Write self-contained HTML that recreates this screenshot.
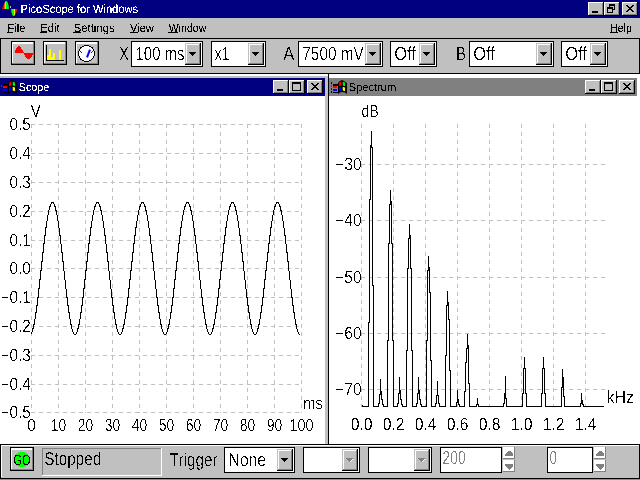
<!DOCTYPE html>
<html><head><meta charset="utf-8"><title>PicoScope for Windows</title>
<style>
html,body{margin:0;padding:0;background:#c0c0c0;overflow:hidden}
svg{display:block;font-family:"Liberation Sans",sans-serif}
</style></head><body>
<svg width="640" height="480" viewBox="0 0 640 480" shape-rendering="crispEdges" text-rendering="geometricPrecision">
<defs><filter id="crisp" x="-5%" y="-20%" width="110%" height="140%" color-interpolation-filters="sRGB"><feComponentTransfer><feFuncA type="discrete" tableValues="0 0 0 1 1"/></feComponentTransfer></filter><filter id="crisp12" x="-5%" y="-20%" width="110%" height="140%" color-interpolation-filters="sRGB"><feComponentTransfer><feFuncA type="discrete" tableValues="0 0 0 0 0 0 0 0 0 1 1 1 1 1 1 1 1 1 1 1"/></feComponentTransfer></filter></defs>
<rect x="0" y="0" width="640" height="480" fill="#c0c0c0"/>
<rect x="0" y="0" width="640" height="18" fill="#000080"/>
<defs><linearGradient id="rb" x1="0" x2="1" y1="0" y2="0"><stop offset="0" stop-color="#f00"/><stop offset=".3" stop-color="#f00"/><stop offset=".45" stop-color="#ff0"/><stop offset=".6" stop-color="#0f0"/><stop offset=".85" stop-color="#0f0"/><stop offset="1" stop-color="#088"/></linearGradient><linearGradient id="rb2" x1="0" x2="1" y1="0" y2="0"><stop offset="0" stop-color="#088"/><stop offset=".12" stop-color="#0f0"/><stop offset=".4" stop-color="#0f0"/><stop offset=".55" stop-color="#ff0"/><stop offset=".7" stop-color="#f00"/><stop offset="1" stop-color="#f00"/></linearGradient></defs>
<g shape-rendering="auto">
<path d="M3 9 L4 6 L6 2 L7 1 L8 1 L9 3 L10 6 L10 9 Z" fill="#000"/>
<path d="M2 9 L3 6 L5 2 L6 1 L7 1 L8 3 L9 6 L9 9 Z" fill="url(#rb)"/>
<path d="M11.5 9.5 L18 9.5 L18 11 L16 15 L15 16.5 L13.5 16.5 L12.5 14 Z" fill="#000"/>
<path d="M11 9 L17.5 9 L17 11 L15 15 L14 16 L13 16 L12 14 L11 11 Z" fill="url(#rb2)"/>
<rect x="10" y="6" width="1" height="2" fill="#c0c0c0"/>
</g>
<text x="20.6" y="13" font-size="12" fill="#fff" textLength="117.5" lengthAdjust="spacingAndGlyphs" filter="url(#crisp12)">PicoScope for Windows</text>
<rect x="588" y="2" width="16" height="14" fill="#c0c0c0"/>
<rect x="588" y="2" width="15" height="1" fill="#fff"/>
<rect x="588" y="2" width="1" height="13" fill="#fff"/>
<rect x="588" y="15" width="16" height="1" fill="#000"/>
<rect x="603" y="2" width="1" height="14" fill="#000"/>
<rect x="589" y="14" width="14" height="1" fill="#808080"/>
<rect x="602" y="3" width="1" height="12" fill="#808080"/>
<rect x="604" y="2" width="16" height="14" fill="#c0c0c0"/>
<rect x="604" y="2" width="15" height="1" fill="#fff"/>
<rect x="604" y="2" width="1" height="13" fill="#fff"/>
<rect x="604" y="15" width="16" height="1" fill="#000"/>
<rect x="619" y="2" width="1" height="14" fill="#000"/>
<rect x="605" y="14" width="14" height="1" fill="#808080"/>
<rect x="618" y="3" width="1" height="12" fill="#808080"/>
<rect x="622" y="2" width="16" height="14" fill="#c0c0c0"/>
<rect x="622" y="2" width="15" height="1" fill="#fff"/>
<rect x="622" y="2" width="1" height="13" fill="#fff"/>
<rect x="622" y="15" width="16" height="1" fill="#000"/>
<rect x="637" y="2" width="1" height="14" fill="#000"/>
<rect x="623" y="14" width="14" height="1" fill="#808080"/>
<rect x="636" y="3" width="1" height="12" fill="#808080"/>
<rect x="592" y="11" width="6" height="2" fill="#000"/>
<rect x="609" y="4" width="6" height="2" fill="#000"/>
<rect x="609" y="4" width="1" height="5" fill="#000"/>
<rect x="614" y="4" width="1" height="6" fill="#000"/>
<rect x="612" y="9" width="3" height="1" fill="#000"/>
<rect x="607" y="7" width="6" height="2" fill="#000"/>
<rect x="607" y="7" width="1" height="6" fill="#000"/>
<rect x="612" y="7" width="1" height="6" fill="#000"/>
<rect x="607" y="12" width="6" height="1" fill="#000"/>
<path d="M626 5 L633 12 M633 5 L626 12" stroke="#000" stroke-width="1.8" fill="none" transform="translate(0.5,0)"/>
<text x="7.5" y="31.5" font-size="12" fill="#000" textLength="17.8" lengthAdjust="spacingAndGlyphs" filter="url(#crisp12)">File</text>
<rect x="7" y="32" width="6" height="1" fill="#000"/>
<text x="40.3" y="31.5" font-size="12" fill="#000" textLength="19.3" lengthAdjust="spacingAndGlyphs" filter="url(#crisp12)">Edit</text>
<rect x="40" y="32" width="7" height="1" fill="#000"/>
<text x="73.7" y="31.5" font-size="12" fill="#000" textLength="41" lengthAdjust="spacingAndGlyphs" filter="url(#crisp12)">Settings</text>
<rect x="73" y="32" width="8" height="1" fill="#000"/>
<text x="130" y="31.5" font-size="12" fill="#000" textLength="23.8" lengthAdjust="spacingAndGlyphs" filter="url(#crisp12)">View</text>
<rect x="130" y="32" width="8" height="1" fill="#000"/>
<text x="168.8" y="31.5" font-size="12" fill="#000" textLength="37.5" lengthAdjust="spacingAndGlyphs" filter="url(#crisp12)">Window</text>
<rect x="168" y="32" width="10" height="1" fill="#000"/>
<text x="610" y="31.5" font-size="12" fill="#000" textLength="21.8" lengthAdjust="spacingAndGlyphs" filter="url(#crisp12)">Help</text>
<rect x="610" y="32" width="8" height="1" fill="#000"/>
<rect x="0" y="38" width="640" height="36" fill="#000"/>
<rect x="1" y="39" width="638" height="34" fill="#c0c0c0"/>
<rect x="11" y="41" width="24" height="24" fill="#000"/>
<rect x="12" y="42" width="22" height="22" fill="#c0c0c0"/>
<rect x="12" y="42" width="21" height="2" fill="#fff"/>
<rect x="12" y="42" width="1" height="21" fill="#fff"/>
<rect x="12" y="63" width="22" height="1" fill="#808080"/>
<rect x="33" y="42" width="1" height="22" fill="#808080"/>
<rect x="43" y="41" width="24" height="24" fill="#000"/>
<rect x="44" y="42" width="22" height="22" fill="#c0c0c0"/>
<rect x="44" y="42" width="21" height="2" fill="#fff"/>
<rect x="44" y="42" width="1" height="21" fill="#fff"/>
<rect x="44" y="63" width="22" height="1" fill="#808080"/>
<rect x="65" y="42" width="1" height="22" fill="#808080"/>
<rect x="75" y="41" width="24" height="24" fill="#000"/>
<rect x="76" y="42" width="22" height="22" fill="#c0c0c0"/>
<rect x="76" y="42" width="21" height="2" fill="#fff"/>
<rect x="76" y="42" width="1" height="21" fill="#fff"/>
<rect x="76" y="63" width="22" height="1" fill="#808080"/>
<rect x="97" y="42" width="1" height="22" fill="#808080"/>
<path d="M15 53 L15 51 L18 46 L20 46 L23 51 L24 53 L33 53 L33 54 L31 58 L29 59 L27 59 L25 57 L24 53 Z" fill="#f00"/>
<rect x="46" y="45" width="1" height="16" fill="#000"/>
<rect x="46" y="60" width="18" height="1" fill="#000"/>
<rect x="47" y="55" width="2" height="5" fill="#ff0"/>
<rect x="49" y="49" width="2" height="11" fill="#ff0"/>
<rect x="51" y="57" width="2" height="3" fill="#ff0"/>
<rect x="53" y="53" width="2" height="7" fill="#ff0"/>
<rect x="59" y="50" width="2" height="10" fill="#ff0"/>
<circle cx="86.5" cy="53.5" r="8" fill="#fff" stroke="#000" stroke-width="1"/>
<path d="M87 57.3 L90 49.7" stroke="#00f" stroke-width="2" fill="none" shape-rendering="geometricPrecision"/>
<path d="M80 51 L82 52.7 M91.3 52.5 L92.8 51" stroke="#00f" stroke-width="1" fill="none"/>
<text x="119.2" y="60" font-size="19" fill="#000" textLength="9.5" lengthAdjust="spacingAndGlyphs" filter="url(#crisp)">X</text>
<text x="283.2" y="60" font-size="19" fill="#000" textLength="11" lengthAdjust="spacingAndGlyphs" filter="url(#crisp)">A</text>
<text x="456" y="60" font-size="19" fill="#000" textLength="10" lengthAdjust="spacingAndGlyphs" filter="url(#crisp)">B</text>
<rect x="131" y="41" width="72" height="26" fill="#000"/>
<rect x="132" y="42" width="70" height="24" fill="#fff"/>
<rect x="185" y="43" width="16" height="22" fill="#c0c0c0"/>
<rect x="186" y="44" width="14" height="1" fill="#fff"/>
<rect x="186" y="44" width="1" height="20" fill="#fff"/>
<rect x="186" y="63" width="14" height="1" fill="#808080"/>
<rect x="199" y="44" width="1" height="20" fill="#808080"/>
<rect x="185" y="64" width="16" height="1" fill="#000"/>
<rect x="200" y="43" width="1" height="22" fill="#000"/>
<rect x="189" y="52" width="7" height="1" fill="#000"/>
<rect x="190" y="53" width="5" height="1" fill="#000"/>
<rect x="191" y="54" width="3" height="1" fill="#000"/>
<rect x="192" y="55" width="1" height="1" fill="#000"/>
<text x="135.6" y="60" font-size="19" fill="#000" textLength="48.8" lengthAdjust="spacingAndGlyphs" filter="url(#crisp)">100 ms</text>
<rect x="211" y="41" width="55" height="26" fill="#000"/>
<rect x="212" y="42" width="53" height="24" fill="#fff"/>
<rect x="248" y="43" width="16" height="22" fill="#c0c0c0"/>
<rect x="249" y="44" width="14" height="1" fill="#fff"/>
<rect x="249" y="44" width="1" height="20" fill="#fff"/>
<rect x="249" y="63" width="14" height="1" fill="#808080"/>
<rect x="262" y="44" width="1" height="20" fill="#808080"/>
<rect x="248" y="64" width="16" height="1" fill="#000"/>
<rect x="263" y="43" width="1" height="22" fill="#000"/>
<rect x="252" y="52" width="7" height="1" fill="#000"/>
<rect x="253" y="53" width="5" height="1" fill="#000"/>
<rect x="254" y="54" width="3" height="1" fill="#000"/>
<rect x="255" y="55" width="1" height="1" fill="#000"/>
<text x="214.8" y="60" font-size="19" fill="#000" textLength="14.5" lengthAdjust="spacingAndGlyphs" filter="url(#crisp)">x1</text>
<rect x="298" y="41" width="85" height="26" fill="#000"/>
<rect x="299" y="42" width="83" height="24" fill="#fff"/>
<rect x="365" y="43" width="16" height="22" fill="#c0c0c0"/>
<rect x="366" y="44" width="14" height="1" fill="#fff"/>
<rect x="366" y="44" width="1" height="20" fill="#fff"/>
<rect x="366" y="63" width="14" height="1" fill="#808080"/>
<rect x="379" y="44" width="1" height="20" fill="#808080"/>
<rect x="365" y="64" width="16" height="1" fill="#000"/>
<rect x="380" y="43" width="1" height="22" fill="#000"/>
<rect x="369" y="52" width="7" height="1" fill="#000"/>
<rect x="370" y="53" width="5" height="1" fill="#000"/>
<rect x="371" y="54" width="3" height="1" fill="#000"/>
<rect x="372" y="55" width="1" height="1" fill="#000"/>
<text x="302.3" y="60" font-size="19" fill="#000" textLength="61.5" lengthAdjust="spacingAndGlyphs" filter="url(#crisp)">7500 mV</text>
<rect x="390" y="41" width="47" height="26" fill="#000"/>
<rect x="391" y="42" width="45" height="24" fill="#fff"/>
<rect x="419" y="43" width="16" height="22" fill="#c0c0c0"/>
<rect x="420" y="44" width="14" height="1" fill="#fff"/>
<rect x="420" y="44" width="1" height="20" fill="#fff"/>
<rect x="420" y="63" width="14" height="1" fill="#808080"/>
<rect x="433" y="44" width="1" height="20" fill="#808080"/>
<rect x="419" y="64" width="16" height="1" fill="#000"/>
<rect x="434" y="43" width="1" height="22" fill="#000"/>
<rect x="423" y="52" width="7" height="1" fill="#000"/>
<rect x="424" y="53" width="5" height="1" fill="#000"/>
<rect x="425" y="54" width="3" height="1" fill="#000"/>
<rect x="426" y="55" width="1" height="1" fill="#000"/>
<text x="394.2" y="60" font-size="19" fill="#000" textLength="21.5" lengthAdjust="spacingAndGlyphs" filter="url(#crisp)">Off</text>
<rect x="469" y="41" width="85" height="26" fill="#000"/>
<rect x="470" y="42" width="83" height="24" fill="#fff"/>
<rect x="536" y="43" width="16" height="22" fill="#c0c0c0"/>
<rect x="537" y="44" width="14" height="1" fill="#fff"/>
<rect x="537" y="44" width="1" height="20" fill="#fff"/>
<rect x="537" y="63" width="14" height="1" fill="#808080"/>
<rect x="550" y="44" width="1" height="20" fill="#808080"/>
<rect x="536" y="64" width="16" height="1" fill="#000"/>
<rect x="551" y="43" width="1" height="22" fill="#000"/>
<rect x="540" y="52" width="7" height="1" fill="#000"/>
<rect x="541" y="53" width="5" height="1" fill="#000"/>
<rect x="542" y="54" width="3" height="1" fill="#000"/>
<rect x="543" y="55" width="1" height="1" fill="#000"/>
<text x="473.2" y="60" font-size="19" fill="#000" textLength="21.5" lengthAdjust="spacingAndGlyphs" filter="url(#crisp)">Off</text>
<rect x="561" y="41" width="47" height="26" fill="#000"/>
<rect x="562" y="42" width="45" height="24" fill="#fff"/>
<rect x="590" y="43" width="16" height="22" fill="#c0c0c0"/>
<rect x="591" y="44" width="14" height="1" fill="#fff"/>
<rect x="591" y="44" width="1" height="20" fill="#fff"/>
<rect x="591" y="63" width="14" height="1" fill="#808080"/>
<rect x="604" y="44" width="1" height="20" fill="#808080"/>
<rect x="590" y="64" width="16" height="1" fill="#000"/>
<rect x="605" y="43" width="1" height="22" fill="#000"/>
<rect x="594" y="52" width="7" height="1" fill="#000"/>
<rect x="595" y="53" width="5" height="1" fill="#000"/>
<rect x="596" y="54" width="3" height="1" fill="#000"/>
<rect x="597" y="55" width="1" height="1" fill="#000"/>
<text x="565.2" y="60" font-size="19" fill="#000" textLength="21.5" lengthAdjust="spacingAndGlyphs" filter="url(#crisp)">Off</text>
<rect x="0" y="74" width="328" height="2" fill="#fff"/>
<rect x="0" y="76" width="328" height="2" fill="#c0c0c0"/>
<rect x="0" y="78" width="325" height="18" fill="#000080"/>
<rect x="0" y="96" width="325" height="348" fill="#fff"/>
<rect x="325" y="76" width="3" height="368" fill="#c0c0c0"/>
<rect x="328" y="74" width="1" height="370" fill="#000"/>
<rect x="329" y="74" width="311" height="370" fill="#fff"/>
<rect x="329" y="78" width="308" height="18" fill="#808080"/>
<rect x="273" y="80" width="16" height="14" fill="#c0c0c0"/>
<rect x="273" y="80" width="15" height="1" fill="#fff"/>
<rect x="273" y="80" width="1" height="13" fill="#fff"/>
<rect x="273" y="93" width="16" height="1" fill="#000"/>
<rect x="288" y="80" width="1" height="14" fill="#000"/>
<rect x="274" y="92" width="14" height="1" fill="#808080"/>
<rect x="287" y="81" width="1" height="12" fill="#808080"/>
<rect x="289" y="80" width="16" height="14" fill="#c0c0c0"/>
<rect x="289" y="80" width="15" height="1" fill="#fff"/>
<rect x="289" y="80" width="1" height="13" fill="#fff"/>
<rect x="289" y="93" width="16" height="1" fill="#000"/>
<rect x="304" y="80" width="1" height="14" fill="#000"/>
<rect x="290" y="92" width="14" height="1" fill="#808080"/>
<rect x="303" y="81" width="1" height="12" fill="#808080"/>
<rect x="307" y="80" width="16" height="14" fill="#c0c0c0"/>
<rect x="307" y="80" width="15" height="1" fill="#fff"/>
<rect x="307" y="80" width="1" height="13" fill="#fff"/>
<rect x="307" y="93" width="16" height="1" fill="#000"/>
<rect x="322" y="80" width="1" height="14" fill="#000"/>
<rect x="308" y="92" width="14" height="1" fill="#808080"/>
<rect x="321" y="81" width="1" height="12" fill="#808080"/>
<rect x="585" y="80" width="16" height="14" fill="#c0c0c0"/>
<rect x="585" y="80" width="15" height="1" fill="#fff"/>
<rect x="585" y="80" width="1" height="13" fill="#fff"/>
<rect x="585" y="93" width="16" height="1" fill="#000"/>
<rect x="600" y="80" width="1" height="14" fill="#000"/>
<rect x="586" y="92" width="14" height="1" fill="#808080"/>
<rect x="599" y="81" width="1" height="12" fill="#808080"/>
<rect x="601" y="80" width="16" height="14" fill="#c0c0c0"/>
<rect x="601" y="80" width="15" height="1" fill="#fff"/>
<rect x="601" y="80" width="1" height="13" fill="#fff"/>
<rect x="601" y="93" width="16" height="1" fill="#000"/>
<rect x="616" y="80" width="1" height="14" fill="#000"/>
<rect x="602" y="92" width="14" height="1" fill="#808080"/>
<rect x="615" y="81" width="1" height="12" fill="#808080"/>
<rect x="619" y="80" width="16" height="14" fill="#c0c0c0"/>
<rect x="619" y="80" width="15" height="1" fill="#fff"/>
<rect x="619" y="80" width="1" height="13" fill="#fff"/>
<rect x="619" y="93" width="16" height="1" fill="#000"/>
<rect x="634" y="80" width="1" height="14" fill="#000"/>
<rect x="620" y="92" width="14" height="1" fill="#808080"/>
<rect x="633" y="81" width="1" height="12" fill="#808080"/>
<rect x="277" y="89" width="6" height="2" fill="#000"/>
<rect x="292" y="82" width="9" height="9" fill="#000"/>
<rect x="293" y="84" width="7" height="6" fill="#c0c0c0"/>
<path d="M311 83 L318 90 M318 83 L311 90" stroke="#000" stroke-width="1.8" fill="none" transform="translate(0.5,0)"/>
<rect x="589" y="89" width="6" height="2" fill="#000"/>
<rect x="604" y="82" width="9" height="9" fill="#000"/>
<rect x="605" y="84" width="7" height="6" fill="#c0c0c0"/>
<path d="M623 83 L630 90 M630 83 L623 90" stroke="#000" stroke-width="1.8" fill="none" transform="translate(0.5,0)"/>
<g transform="translate(0,77)" shape-rendering="auto"><path d="M8 6 L10 4 L12 3 L14 4 L17 6 L17 17 L15 15.5 L12 15 L10 15.5 L8 17 Z" fill="#000"/><path d="M9.2 5.5 L11.3 4.6 L11.3 8.6 L9.2 9.4 Z" fill="#f00"/><path d="M12.7 4.6 L15 5.5 L15 9.2 L12.7 8.6 Z" fill="#0e0"/><path d="M9.2 10.6 L11.3 9.8 L11.3 13.6 L9.2 14.4 Z" fill="#00f"/><path d="M12.7 9.8 L15 10.6 L15 14.2 L12.7 13.6 Z" fill="#ff0"/><rect x="3" y="7" width="5" height="2" fill="#000"/><rect x="3" y="9" width="4" height="2" fill="#f00"/><rect x="3" y="12" width="4" height="2" fill="#00f"/><rect x="3" y="15" width="5" height="1" fill="#000"/><rect x="1" y="5" width="1" height="2" fill="#000"/><rect x="1" y="8" width="1" height="2" fill="#f00"/><rect x="1" y="11" width="1" height="2" fill="#00f"/><rect x="1" y="14" width="1" height="2" fill="#000"/></g>
<g transform="translate(330,77)" shape-rendering="auto"><path d="M8 6 L10 4 L12 3 L14 4 L17 6 L17 17 L15 15.5 L12 15 L10 15.5 L8 17 Z" fill="#000"/><path d="M9.2 5.5 L11.3 4.6 L11.3 8.6 L9.2 9.4 Z" fill="#f00"/><path d="M12.7 4.6 L15 5.5 L15 9.2 L12.7 8.6 Z" fill="#0e0"/><path d="M9.2 10.6 L11.3 9.8 L11.3 13.6 L9.2 14.4 Z" fill="#00f"/><path d="M12.7 9.8 L15 10.6 L15 14.2 L12.7 13.6 Z" fill="#ff0"/><rect x="3" y="7" width="5" height="2" fill="#000"/><rect x="3" y="9" width="4" height="2" fill="#f00"/><rect x="3" y="12" width="4" height="2" fill="#00f"/><rect x="3" y="15" width="5" height="1" fill="#000"/><rect x="1" y="5" width="1" height="2" fill="#000"/><rect x="1" y="8" width="1" height="2" fill="#f00"/><rect x="1" y="11" width="1" height="2" fill="#00f"/><rect x="1" y="14" width="1" height="2" fill="#000"/></g>
<text x="18.8" y="90.5" font-size="11.5" fill="#fff" textLength="30.5" lengthAdjust="spacingAndGlyphs" filter="url(#crisp12)">Scope</text>
<text x="348.8" y="91" font-size="11.5" fill="#000" textLength="47.5" lengthAdjust="spacingAndGlyphs" filter="url(#crisp12)">Spectrum</text>
<path d="M31.5 124 V413 M58.5 124 V413 M85.5 124 V413 M112.5 124 V413 M139.5 124 V413 M166.5 124 V413 M193.5 124 V413 M220.5 124 V413 M247.5 124 V413 M274.5 124 V413 M301.5 124 V413 M31 124.5 H302 M31 153.5 H302 M31 182.5 H302 M31 211.5 H302 M31 240.5 H302 M31 268.5 H302 M31 297.5 H302 M31 326.5 H302 M31 355.5 H302 M31 384.5 H302 M31 412.5 H302" stroke="#c0c0c0" stroke-width="1" fill="none" stroke-dasharray="4 4" shape-rendering="crispEdges"/>
<polyline points="31.0,333.9 31.5,333.1 32.0,331.9 32.5,330.5 33.0,328.8 33.5,326.8 34.0,324.5 34.5,321.9 35.0,319.1 35.5,316.0 36.0,312.7 36.5,309.1 37.0,305.4 37.5,301.5 38.0,297.4 38.5,293.2 39.0,288.9 39.5,284.5 40.0,280.0 40.5,275.4 41.0,270.8 41.5,266.2 42.0,261.6 42.5,257.0 43.0,252.5 43.5,248.1 44.0,243.8 44.5,239.6 45.0,235.5 45.5,231.6 46.0,227.9 46.5,224.3 47.0,221.0 47.5,217.9 48.0,215.1 48.5,212.5 49.0,210.2 49.5,208.2 50.0,206.5 50.5,205.1 51.0,203.9 51.5,203.1 52.0,202.7 52.5,202.5 53.0,202.7 53.5,203.1 54.0,203.9 54.5,205.1 55.0,206.5 55.5,208.2 56.0,210.2 56.5,212.5 57.0,215.1 57.5,217.9 58.0,221.0 58.5,224.3 59.0,227.9 59.5,231.6 60.0,235.5 60.5,239.6 61.0,243.8 61.5,248.1 62.0,252.5 62.5,257.0 63.0,261.6 63.5,266.2 64.0,270.8 64.5,275.4 65.0,280.0 65.5,284.5 66.0,288.9 66.5,293.2 67.0,297.4 67.5,301.5 68.0,305.4 68.5,309.1 69.0,312.7 69.5,316.0 70.0,319.1 70.5,321.9 71.0,324.5 71.5,326.8 72.0,328.8 72.5,330.5 73.0,331.9 73.5,333.1 74.0,333.9 74.5,334.3 75.0,334.5 75.5,334.3 76.0,333.9 76.5,333.1 77.0,331.9 77.5,330.5 78.0,328.8 78.5,326.8 79.0,324.5 79.5,321.9 80.0,319.1 80.5,316.0 81.0,312.7 81.5,309.1 82.0,305.4 82.5,301.5 83.0,297.4 83.5,293.2 84.0,288.9 84.5,284.5 85.0,280.0 85.5,275.4 86.0,270.8 86.5,266.2 87.0,261.6 87.5,257.0 88.0,252.5 88.5,248.1 89.0,243.8 89.5,239.6 90.0,235.5 90.5,231.6 91.0,227.9 91.5,224.3 92.0,221.0 92.5,217.9 93.0,215.1 93.5,212.5 94.0,210.2 94.5,208.2 95.0,206.5 95.5,205.1 96.0,203.9 96.5,203.1 97.0,202.7 97.5,202.5 98.0,202.7 98.5,203.1 99.0,203.9 99.5,205.1 100.0,206.5 100.5,208.2 101.0,210.2 101.5,212.5 102.0,215.1 102.5,217.9 103.0,221.0 103.5,224.3 104.0,227.9 104.5,231.6 105.0,235.5 105.5,239.6 106.0,243.8 106.5,248.1 107.0,252.5 107.5,257.0 108.0,261.6 108.5,266.2 109.0,270.8 109.5,275.4 110.0,280.0 110.5,284.5 111.0,288.9 111.5,293.2 112.0,297.4 112.5,301.5 113.0,305.4 113.5,309.1 114.0,312.7 114.5,316.0 115.0,319.1 115.5,321.9 116.0,324.5 116.5,326.8 117.0,328.8 117.5,330.5 118.0,331.9 118.5,333.1 119.0,333.9 119.5,334.3 120.0,334.5 120.5,334.3 121.0,333.9 121.5,333.1 122.0,331.9 122.5,330.5 123.0,328.8 123.5,326.8 124.0,324.5 124.5,321.9 125.0,319.1 125.5,316.0 126.0,312.7 126.5,309.1 127.0,305.4 127.5,301.5 128.0,297.4 128.5,293.2 129.0,288.9 129.5,284.5 130.0,280.0 130.5,275.4 131.0,270.8 131.5,266.2 132.0,261.6 132.5,257.0 133.0,252.5 133.5,248.1 134.0,243.8 134.5,239.6 135.0,235.5 135.5,231.6 136.0,227.9 136.5,224.3 137.0,221.0 137.5,217.9 138.0,215.1 138.5,212.5 139.0,210.2 139.5,208.2 140.0,206.5 140.5,205.1 141.0,203.9 141.5,203.1 142.0,202.7 142.5,202.5 143.0,202.7 143.5,203.1 144.0,203.9 144.5,205.1 145.0,206.5 145.5,208.2 146.0,210.2 146.5,212.5 147.0,215.1 147.5,217.9 148.0,221.0 148.5,224.3 149.0,227.9 149.5,231.6 150.0,235.5 150.5,239.6 151.0,243.8 151.5,248.1 152.0,252.5 152.5,257.0 153.0,261.6 153.5,266.2 154.0,270.8 154.5,275.4 155.0,280.0 155.5,284.5 156.0,288.9 156.5,293.2 157.0,297.4 157.5,301.5 158.0,305.4 158.5,309.1 159.0,312.7 159.5,316.0 160.0,319.1 160.5,321.9 161.0,324.5 161.5,326.8 162.0,328.8 162.5,330.5 163.0,331.9 163.5,333.1 164.0,333.9 164.5,334.3 165.0,334.5 165.5,334.3 166.0,333.9 166.5,333.1 167.0,331.9 167.5,330.5 168.0,328.8 168.5,326.8 169.0,324.5 169.5,321.9 170.0,319.1 170.5,316.0 171.0,312.7 171.5,309.1 172.0,305.4 172.5,301.5 173.0,297.4 173.5,293.2 174.0,288.9 174.5,284.5 175.0,280.0 175.5,275.4 176.0,270.8 176.5,266.2 177.0,261.6 177.5,257.0 178.0,252.5 178.5,248.1 179.0,243.8 179.5,239.6 180.0,235.5 180.5,231.6 181.0,227.9 181.5,224.3 182.0,221.0 182.5,217.9 183.0,215.1 183.5,212.5 184.0,210.2 184.5,208.2 185.0,206.5 185.5,205.1 186.0,203.9 186.5,203.1 187.0,202.7 187.5,202.5 188.0,202.7 188.5,203.1 189.0,203.9 189.5,205.1 190.0,206.5 190.5,208.2 191.0,210.2 191.5,212.5 192.0,215.1 192.5,217.9 193.0,221.0 193.5,224.3 194.0,227.9 194.5,231.6 195.0,235.5 195.5,239.6 196.0,243.8 196.5,248.1 197.0,252.5 197.5,257.0 198.0,261.6 198.5,266.2 199.0,270.8 199.5,275.4 200.0,280.0 200.5,284.5 201.0,288.9 201.5,293.2 202.0,297.4 202.5,301.5 203.0,305.4 203.5,309.1 204.0,312.7 204.5,316.0 205.0,319.1 205.5,321.9 206.0,324.5 206.5,326.8 207.0,328.8 207.5,330.5 208.0,331.9 208.5,333.1 209.0,333.9 209.5,334.3 210.0,334.5 210.5,334.3 211.0,333.9 211.5,333.1 212.0,331.9 212.5,330.5 213.0,328.8 213.5,326.8 214.0,324.5 214.5,321.9 215.0,319.1 215.5,316.0 216.0,312.7 216.5,309.1 217.0,305.4 217.5,301.5 218.0,297.4 218.5,293.2 219.0,288.9 219.5,284.5 220.0,280.0 220.5,275.4 221.0,270.8 221.5,266.2 222.0,261.6 222.5,257.0 223.0,252.5 223.5,248.1 224.0,243.8 224.5,239.6 225.0,235.5 225.5,231.6 226.0,227.9 226.5,224.3 227.0,221.0 227.5,217.9 228.0,215.1 228.5,212.5 229.0,210.2 229.5,208.2 230.0,206.5 230.5,205.1 231.0,203.9 231.5,203.1 232.0,202.7 232.5,202.5 233.0,202.7 233.5,203.1 234.0,203.9 234.5,205.1 235.0,206.5 235.5,208.2 236.0,210.2 236.5,212.5 237.0,215.1 237.5,217.9 238.0,221.0 238.5,224.3 239.0,227.9 239.5,231.6 240.0,235.5 240.5,239.6 241.0,243.8 241.5,248.1 242.0,252.5 242.5,257.0 243.0,261.6 243.5,266.2 244.0,270.8 244.5,275.4 245.0,280.0 245.5,284.5 246.0,288.9 246.5,293.2 247.0,297.4 247.5,301.5 248.0,305.4 248.5,309.1 249.0,312.7 249.5,316.0 250.0,319.1 250.5,321.9 251.0,324.5 251.5,326.8 252.0,328.8 252.5,330.5 253.0,331.9 253.5,333.1 254.0,333.9 254.5,334.3 255.0,334.5 255.5,334.3 256.0,333.9 256.5,333.1 257.0,331.9 257.5,330.5 258.0,328.8 258.5,326.8 259.0,324.5 259.5,321.9 260.0,319.1 260.5,316.0 261.0,312.7 261.5,309.1 262.0,305.4 262.5,301.5 263.0,297.4 263.5,293.2 264.0,288.9 264.5,284.5 265.0,280.0 265.5,275.4 266.0,270.8 266.5,266.2 267.0,261.6 267.5,257.0 268.0,252.5 268.5,248.1 269.0,243.8 269.5,239.6 270.0,235.5 270.5,231.6 271.0,227.9 271.5,224.3 272.0,221.0 272.5,217.9 273.0,215.1 273.5,212.5 274.0,210.2 274.5,208.2 275.0,206.5 275.5,205.1 276.0,203.9 276.5,203.1 277.0,202.7 277.5,202.5 278.0,202.7 278.5,203.1 279.0,203.9 279.5,205.1 280.0,206.5 280.5,208.2 281.0,210.2 281.5,212.5 282.0,215.1 282.5,217.9 283.0,221.0 283.5,224.3 284.0,227.9 284.5,231.6 285.0,235.5 285.5,239.6 286.0,243.8 286.5,248.1 287.0,252.5 287.5,257.0 288.0,261.6 288.5,266.2 289.0,270.8 289.5,275.4 290.0,280.0 290.5,284.5 291.0,288.9 291.5,293.2 292.0,297.4 292.5,301.5 293.0,305.4 293.5,309.1 294.0,312.7 294.5,316.0 295.0,319.1 295.5,321.9 296.0,324.5 296.5,326.8 297.0,328.8 297.5,330.5 298.0,331.9 298.5,333.1 299.0,333.9 299.5,334.3 300.0,334.5" fill="none" stroke="#000" stroke-width="1.1"/>
<text x="30.8" y="130.2" font-size="17.6" fill="#000" text-anchor="end" textLength="21.2" lengthAdjust="spacingAndGlyphs" filter="url(#crisp)">0.5</text>
<text x="30.8" y="159.2" font-size="17.6" fill="#000" text-anchor="end" textLength="21.2" lengthAdjust="spacingAndGlyphs" filter="url(#crisp)">0.4</text>
<text x="30.8" y="188.2" font-size="17.6" fill="#000" text-anchor="end" textLength="21.2" lengthAdjust="spacingAndGlyphs" filter="url(#crisp)">0.3</text>
<text x="30.8" y="217.2" font-size="17.6" fill="#000" text-anchor="end" textLength="21.2" lengthAdjust="spacingAndGlyphs" filter="url(#crisp)">0.2</text>
<text x="30.8" y="246.2" font-size="17.6" fill="#000" text-anchor="end" textLength="21.2" lengthAdjust="spacingAndGlyphs" filter="url(#crisp)">0.1</text>
<text x="30.8" y="274.2" font-size="17.6" fill="#000" text-anchor="end" textLength="21.2" lengthAdjust="spacingAndGlyphs" filter="url(#crisp)">0.0</text>
<text x="30.8" y="303.2" font-size="17.6" fill="#000" text-anchor="end" textLength="30.4" lengthAdjust="spacingAndGlyphs" filter="url(#crisp)">−0.1</text>
<text x="30.8" y="332.2" font-size="17.6" fill="#000" text-anchor="end" textLength="30.4" lengthAdjust="spacingAndGlyphs" filter="url(#crisp)">−0.2</text>
<text x="30.8" y="361.2" font-size="17.6" fill="#000" text-anchor="end" textLength="30.4" lengthAdjust="spacingAndGlyphs" filter="url(#crisp)">−0.3</text>
<text x="30.8" y="390.2" font-size="17.6" fill="#000" text-anchor="end" textLength="30.4" lengthAdjust="spacingAndGlyphs" filter="url(#crisp)">−0.4</text>
<text x="30.8" y="418.2" font-size="17.6" fill="#000" text-anchor="end" textLength="30.4" lengthAdjust="spacingAndGlyphs" filter="url(#crisp)">−0.5</text>
<text x="31.5" y="431" font-size="17.6" fill="#000" text-anchor="middle" textLength="8.5" lengthAdjust="spacingAndGlyphs" filter="url(#crisp)">0</text>
<text x="58.5" y="431" font-size="17.6" fill="#000" text-anchor="middle" textLength="15.5" lengthAdjust="spacingAndGlyphs" filter="url(#crisp)">10</text>
<text x="85.5" y="431" font-size="17.6" fill="#000" text-anchor="middle" textLength="15.5" lengthAdjust="spacingAndGlyphs" filter="url(#crisp)">20</text>
<text x="112.5" y="431" font-size="17.6" fill="#000" text-anchor="middle" textLength="15.5" lengthAdjust="spacingAndGlyphs" filter="url(#crisp)">30</text>
<text x="139.5" y="431" font-size="17.6" fill="#000" text-anchor="middle" textLength="15.5" lengthAdjust="spacingAndGlyphs" filter="url(#crisp)">40</text>
<text x="166.5" y="431" font-size="17.6" fill="#000" text-anchor="middle" textLength="15.5" lengthAdjust="spacingAndGlyphs" filter="url(#crisp)">50</text>
<text x="193.5" y="431" font-size="17.6" fill="#000" text-anchor="middle" textLength="15.5" lengthAdjust="spacingAndGlyphs" filter="url(#crisp)">60</text>
<text x="220.5" y="431" font-size="17.6" fill="#000" text-anchor="middle" textLength="15.5" lengthAdjust="spacingAndGlyphs" filter="url(#crisp)">70</text>
<text x="247.5" y="431" font-size="17.6" fill="#000" text-anchor="middle" textLength="15.5" lengthAdjust="spacingAndGlyphs" filter="url(#crisp)">80</text>
<text x="274.5" y="431" font-size="17.6" fill="#000" text-anchor="middle" textLength="15.5" lengthAdjust="spacingAndGlyphs" filter="url(#crisp)">90</text>
<text x="301.5" y="431" font-size="17.6" fill="#000" text-anchor="middle" textLength="24" lengthAdjust="spacingAndGlyphs" filter="url(#crisp)">100</text>
<text x="30.6" y="116.6" font-size="18" fill="#000" textLength="10.5" lengthAdjust="spacingAndGlyphs" filter="url(#crisp)">V</text>
<text x="303.2" y="409" font-size="17.6" fill="#000" textLength="19.5" lengthAdjust="spacingAndGlyphs" filter="url(#crisp)">ms</text>
<path d="M361.5 124 V407 M393.5 124 V407 M425.5 124 V407 M457.5 124 V407 M489.5 124 V407 M521.5 124 V407 M553.5 124 V407 M585.5 124 V407 M361 164.5 H605 M361 220.5 H605 M361 277.5 H605 M361 333.5 H605 M361 389.5 H605" stroke="#c0c0c0" stroke-width="1" fill="none" stroke-dasharray="4 4" shape-rendering="crispEdges"/>
<path d="M362.5 404.5 V406.5 H368.5 V322.0 H369.5 V199.1 H370.5 V145.0 H371.5 V130.5 V147.3 H372.5 V285.5 H373.5 V406.5 H378.5 V403.4 H379.5 V394.4 H380.5 V378.5 V391.9 H381.5 V399.6 H382.5 V404.5 H383.5 V406.5 H387.5 V340.0 H388.5 V243.4 H389.5 V204.0 H390.5 V189.5 V201.0 H391.5 V243.4 H392.5 V340.0 H393.5 V406.5 H397.5 V403.2 H398.5 V393.5 H399.5 V376.5 V390.9 H400.5 V399.1 H401.5 V404.4 H402.5 V406.5 H406.5 V350.4 H407.5 V268.9 H408.5 V238.0 H409.5 V223.5 V235.0 H410.5 V268.9 H411.5 V350.4 H412.5 V406.5 H416.5 V403.2 H417.5 V393.5 H418.5 V376.5 V390.9 H419.5 V399.1 H420.5 V404.4 H421.5 V406.5 H426.5 V340.2 H427.5 V270.0 H428.5 V255.5 V267.0 H429.5 V292.9 H430.5 V360.2 H431.5 V406.5 H435.5 V403.6 H436.5 V395.2 H437.5 V380.5 V395.2 H438.5 V403.6 H439.5 V406.5 H445.5 V355.5 H446.5 V305.0 H447.5 V290.5 V302.0 H448.5 V319.1 H449.5 V370.9 H450.5 V406.5 H456.5 V402.3 H457.5 V389.5 V399.1 H458.5 V404.6 H459.5 V406.5 H464.5 V391.0 H465.5 V362.9 H466.5 V348.0 H467.5 V333.5 V345.1 H468.5 V383.6 H469.5 V406.5 H476.5 V404.2 H477.5 V397.5 V404.2 H478.5 V406.5 H503.5 V403.1 H504.5 V393.1 H505.5 V375.5 V398.9 H506.5 V406.5 H522.5 V393.9 H523.5 V368.6 H524.5 V356.5 V368.6 H525.5 V393.9 H526.5 V406.5 H541.5 V393.9 H542.5 V368.6 H543.5 V356.5 V368.6 H544.5 V393.9 H545.5 V406.5 H561.5 V387.2 H562.5 V368.5 V377.6 H563.5 V396.9 H564.5 V406.5 H580.5 V403.0 H581.5 V392.5 V400.3 H582.5 V404.9 H583.5 V406.5 H604" fill="none" stroke="#000" stroke-width="1"/>
<text x="361.6" y="170.2" font-size="17.6" fill="#000" text-anchor="end" textLength="26.5" lengthAdjust="spacingAndGlyphs" filter="url(#crisp)">−30</text>
<text x="361.6" y="226.2" font-size="17.6" fill="#000" text-anchor="end" textLength="26.5" lengthAdjust="spacingAndGlyphs" filter="url(#crisp)">−40</text>
<text x="361.6" y="283.2" font-size="17.6" fill="#000" text-anchor="end" textLength="26.5" lengthAdjust="spacingAndGlyphs" filter="url(#crisp)">−50</text>
<text x="361.6" y="339.2" font-size="17.6" fill="#000" text-anchor="end" textLength="26.5" lengthAdjust="spacingAndGlyphs" filter="url(#crisp)">−60</text>
<text x="361.6" y="395.2" font-size="17.6" fill="#000" text-anchor="end" textLength="26.5" lengthAdjust="spacingAndGlyphs" filter="url(#crisp)">−70</text>
<text x="361.7" y="430" font-size="17.6" fill="#000" text-anchor="middle" textLength="21.8" lengthAdjust="spacingAndGlyphs" filter="url(#crisp)">0.0</text>
<text x="393.7" y="430" font-size="17.6" fill="#000" text-anchor="middle" textLength="21.8" lengthAdjust="spacingAndGlyphs" filter="url(#crisp)">0.2</text>
<text x="425.7" y="430" font-size="17.6" fill="#000" text-anchor="middle" textLength="21.8" lengthAdjust="spacingAndGlyphs" filter="url(#crisp)">0.4</text>
<text x="457.7" y="430" font-size="17.6" fill="#000" text-anchor="middle" textLength="21.8" lengthAdjust="spacingAndGlyphs" filter="url(#crisp)">0.6</text>
<text x="489.7" y="430" font-size="17.6" fill="#000" text-anchor="middle" textLength="21.8" lengthAdjust="spacingAndGlyphs" filter="url(#crisp)">0.8</text>
<text x="521.7" y="430" font-size="17.6" fill="#000" text-anchor="middle" textLength="21.8" lengthAdjust="spacingAndGlyphs" filter="url(#crisp)">1.0</text>
<text x="553.7" y="430" font-size="17.6" fill="#000" text-anchor="middle" textLength="21.8" lengthAdjust="spacingAndGlyphs" filter="url(#crisp)">1.2</text>
<text x="585.7" y="430" font-size="17.6" fill="#000" text-anchor="middle" textLength="21.8" lengthAdjust="spacingAndGlyphs" filter="url(#crisp)">1.4</text>
<text x="361.4" y="116.7" font-size="17.6" fill="#000" textLength="17.5" lengthAdjust="spacingAndGlyphs" filter="url(#crisp)">dB</text>
<text x="606.6" y="403.2" font-size="17.6" fill="#000" textLength="27.5" lengthAdjust="spacingAndGlyphs" filter="url(#crisp)">kHz</text>
<rect x="0" y="444" width="640" height="35" fill="#000"/>
<rect x="1" y="445" width="638" height="33" fill="#c0c0c0"/>
<rect x="1" y="445" width="638" height="1" fill="#fff"/>
<rect x="1" y="445" width="1" height="32" fill="#fff"/>
<rect x="0" y="479" width="640" height="1" fill="#909090"/>
<rect x="10" y="447" width="24" height="24" fill="#000"/>
<rect x="11" y="448" width="22" height="22" fill="#c0c0c0"/>
<rect x="11" y="448" width="21" height="2" fill="#fff"/>
<rect x="11" y="448" width="1" height="21" fill="#fff"/>
<rect x="11" y="469" width="22" height="1" fill="#808080"/>
<rect x="32" y="448" width="1" height="22" fill="#808080"/>
<circle cx="22" cy="459.5" r="7.8" fill="#0f0" shape-rendering="auto"/>
<text x="22" y="464.8" font-size="14.9" fill="#000" text-anchor="middle" textLength="17" lengthAdjust="spacingAndGlyphs" filter="url(#crisp12)">GO</text>
<rect x="42" y="448" width="120" height="28" fill="#c0c0c0"/>
<rect x="42" y="448" width="120" height="1" fill="#808080"/>
<rect x="42" y="448" width="1" height="28" fill="#808080"/>
<rect x="42" y="475" width="120" height="1" fill="#fff"/>
<rect x="161" y="448" width="1" height="28" fill="#fff"/>
<text x="44.2" y="464.7" font-size="18.5" fill="#000" textLength="57" lengthAdjust="spacingAndGlyphs" filter="url(#crisp)">Stopped</text>
<text x="169.6" y="465.8" font-size="18.5" fill="#000" textLength="48" lengthAdjust="spacingAndGlyphs" filter="url(#crisp)">Trigger</text>
<rect x="224" y="447" width="71" height="26" fill="#000"/>
<rect x="225" y="448" width="69" height="24" fill="#fff"/>
<rect x="277" y="449" width="16" height="22" fill="#c0c0c0"/>
<rect x="278" y="450" width="14" height="1" fill="#fff"/>
<rect x="278" y="450" width="1" height="20" fill="#fff"/>
<rect x="278" y="469" width="14" height="1" fill="#808080"/>
<rect x="291" y="450" width="1" height="20" fill="#808080"/>
<rect x="277" y="470" width="16" height="1" fill="#000"/>
<rect x="292" y="449" width="1" height="22" fill="#000"/>
<rect x="281" y="458" width="7" height="1" fill="#000"/>
<rect x="282" y="459" width="5" height="1" fill="#000"/>
<rect x="283" y="460" width="3" height="1" fill="#000"/>
<rect x="284" y="461" width="1" height="1" fill="#000"/>
<text x="228.6" y="465.8" font-size="18.5" fill="#000" textLength="37.5" lengthAdjust="spacingAndGlyphs" filter="url(#crisp)">None</text>
<rect x="303" y="447" width="57" height="26" fill="#000"/>
<rect x="304" y="448" width="55" height="24" fill="#fff"/>
<rect x="342" y="449" width="16" height="22" fill="#c0c0c0"/>
<rect x="343" y="450" width="14" height="1" fill="#fff"/>
<rect x="343" y="450" width="1" height="20" fill="#fff"/>
<rect x="343" y="469" width="14" height="1" fill="#808080"/>
<rect x="356" y="450" width="1" height="20" fill="#808080"/>
<rect x="342" y="470" width="16" height="1" fill="#000"/>
<rect x="357" y="449" width="1" height="22" fill="#000"/>
<rect x="346" y="458" width="7" height="1" fill="#808080"/>
<rect x="347" y="459" width="5" height="1" fill="#808080"/>
<rect x="348" y="460" width="3" height="1" fill="#808080"/>
<rect x="349" y="461" width="1" height="1" fill="#808080"/>
<path d="M350 462 L353 459" stroke="#fff" stroke-width="1" fill="none"/>
<rect x="368" y="447" width="64" height="26" fill="#000"/>
<rect x="369" y="448" width="62" height="24" fill="#fff"/>
<rect x="414" y="449" width="16" height="22" fill="#c0c0c0"/>
<rect x="415" y="450" width="14" height="1" fill="#fff"/>
<rect x="415" y="450" width="1" height="20" fill="#fff"/>
<rect x="415" y="469" width="14" height="1" fill="#808080"/>
<rect x="428" y="450" width="1" height="20" fill="#808080"/>
<rect x="414" y="470" width="16" height="1" fill="#000"/>
<rect x="429" y="449" width="1" height="22" fill="#000"/>
<rect x="418" y="458" width="7" height="1" fill="#808080"/>
<rect x="419" y="459" width="5" height="1" fill="#808080"/>
<rect x="420" y="460" width="3" height="1" fill="#808080"/>
<rect x="421" y="461" width="1" height="1" fill="#808080"/>
<path d="M422 462 L425 459" stroke="#fff" stroke-width="1" fill="none"/>
<rect x="440" y="447" width="62" height="26" fill="#000"/>
<rect x="441" y="448" width="60" height="24" fill="#fff"/>
<text x="442.6" y="464" font-size="19" fill="#808080" textLength="23" lengthAdjust="spacingAndGlyphs" filter="url(#crisp)">200</text>
<rect x="503" y="447" width="12" height="12" fill="#fff"/>
<rect x="503" y="458" width="12" height="1" fill="#808080"/>
<rect x="514" y="447" width="1" height="12" fill="#808080"/>
<rect x="508" y="451" width="3" height="1" fill="#808080"/>
<rect x="507" y="452" width="5" height="1" fill="#808080"/>
<rect x="506" y="453" width="7" height="1" fill="#808080"/>
<rect x="505" y="454" width="8" height="1" fill="#808080"/>
<rect x="505" y="455" width="8" height="1" fill="#808080"/>
<rect x="503" y="460" width="12" height="12" fill="#fff"/>
<rect x="503" y="471" width="12" height="1" fill="#808080"/>
<rect x="514" y="460" width="1" height="12" fill="#808080"/>
<rect x="505" y="464" width="8" height="1" fill="#808080"/>
<rect x="505" y="465" width="8" height="1" fill="#808080"/>
<rect x="506" y="466" width="7" height="1" fill="#808080"/>
<rect x="507" y="467" width="5" height="1" fill="#808080"/>
<rect x="508" y="468" width="3" height="1" fill="#808080"/>
<rect x="509" y="469" width="1" height="1" fill="#808080"/>
<rect x="547" y="447" width="46" height="26" fill="#000"/>
<rect x="548" y="448" width="44" height="24" fill="#fff"/>
<text x="549.6" y="464" font-size="19" fill="#808080" textLength="7.5" lengthAdjust="spacingAndGlyphs" filter="url(#crisp)">0</text>
<rect x="594" y="447" width="12" height="12" fill="#fff"/>
<rect x="594" y="458" width="12" height="1" fill="#808080"/>
<rect x="605" y="447" width="1" height="12" fill="#808080"/>
<rect x="599" y="451" width="3" height="1" fill="#808080"/>
<rect x="598" y="452" width="5" height="1" fill="#808080"/>
<rect x="597" y="453" width="7" height="1" fill="#808080"/>
<rect x="596" y="454" width="8" height="1" fill="#808080"/>
<rect x="596" y="455" width="8" height="1" fill="#808080"/>
<rect x="594" y="460" width="12" height="12" fill="#fff"/>
<rect x="594" y="471" width="12" height="1" fill="#808080"/>
<rect x="605" y="460" width="1" height="12" fill="#808080"/>
<rect x="596" y="464" width="8" height="1" fill="#808080"/>
<rect x="596" y="465" width="8" height="1" fill="#808080"/>
<rect x="597" y="466" width="7" height="1" fill="#808080"/>
<rect x="598" y="467" width="5" height="1" fill="#808080"/>
<rect x="599" y="468" width="3" height="1" fill="#808080"/>
<rect x="600" y="469" width="1" height="1" fill="#808080"/>
</svg>
</body></html>
